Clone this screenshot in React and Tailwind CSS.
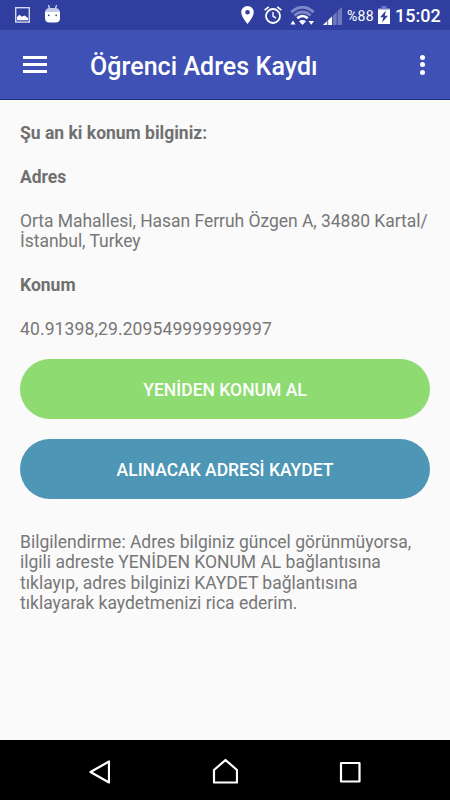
/**
 * App.jsx — Student address registration screen
 */

function StatusBar() {
  return (
    <div className="h-[30px] bg-[#303f9f] flex items-center text-white">
      {/* Notifications */}
      <svg className="w-[15px] h-[16px] ml-[15px]" viewBox="0 0 15 16">
        <rect x="0.7" y="0.7" width="13.6" height="14.4" fill="none" stroke="#d3d7f0" strokeWidth="1.4" />
        <path d="M2 13.2V10l2.5-2.2 2.3 2 2.7-1.3 3.5 2.5v2.2z" fill="white" />
      </svg>
      <svg className="w-[15px] h-[18px] ml-[15px] -mt-[3px]" viewBox="0 0 15 18">
        <path d="M3.5 0l1 3.5M11.5 0l-1 3.5" stroke="#dfe2f5" strokeWidth="1.2" />
        <path d="M0 8C0 4.5 2 3 5 3h5c3 0 5 1.5 5 5z" fill="#c5cae9" />
        <path d="M0 7h15v6c0 3-1.5 4.5-4.5 4.5h-6C1.5 17.5 0 16 0 13z" fill="white" />
        <circle cx="3.8" cy="10.3" r="0.9" fill="#303f9f" />
        <circle cx="11.2" cy="10.3" r="0.9" fill="#303f9f" />
      </svg>

      {/* Location, alarm, wifi, signal */}
      <svg className="w-[13px] h-[18px] ml-[181px]" viewBox="0 0 13 18">
        <path fillRule="evenodd" d="M6.5 0A6.3 6.3 0 0 0 0.2 6.3C0.2 10.7 6.5 18 6.5 18s6.3-7.3 6.3-11.7A6.3 6.3 0 0 0 6.5 0zm0 4a2.3 2.3 0 1 1 0 4.6 2.3 2.3 0 0 1 0-4.6z" fill="white" />
      </svg>
      <svg className="w-[18px] h-[18px] ml-[10px]" viewBox="0 0 18 18" fill="none" stroke="white">
        <circle cx="9" cy="10" r="7" strokeWidth="1.8" />
        <path d="M9 6v4.2l3 1.9" strokeWidth="1.4" />
        <path d="M0.6 4.2L4.8 0.8M17.4 4.2l-4.2-3.4" strokeWidth="1.7" />
      </svg>
      <svg className="w-[26px] h-[20px] ml-[8px] mt-[2px]" viewBox="0 0 26 20" fill="none">
        <path d="M1.5 6.3C8-0.3 17-0.3 23.500 6.300" stroke="#7d86c6" strokeWidth="3" />
        <path d="M4.500 9.600c4.700-4.800 11.300-4.800 16 0" stroke="#7d86c6" strokeWidth="2.800" />
        <path d="M7.300 12.300c3.200-3 7.200-3 10.400 0" stroke="white" strokeWidth="2.800" />
        <path d="M9 15.200c2.200-1.700 4.800-1.700 7 0L12.500 19z" fill="white" />
        <path d="M0.500 18.500l2.500-4 2.500 4zM18.500 15H24l-2.700 3.800z" fill="white" />
      </svg>
      <svg className="w-[19px] h-[18px] ml-[7px] mt-[2px]" viewBox="0 0 19 18">
        <path d="M0 18L19 0v18z" fill="#7079bd" />
        <path d="M0 18l9.5-9v9z" fill="white" />
        <path d="M4.7 12v6M9.5 7v11M14.2 3v15" stroke="#303f9f" strokeWidth="0.9" />
      </svg>

      <span className="w-[27px] ml-[5px] text-[14px] leading-none tracking-[0.3px] whitespace-nowrap mt-[1px]">%88</span>
      <svg className="w-[12px] h-[18px] ml-[4px] -mt-[1px]" viewBox="0 0 12 18">
        <path d="M3.5 0h5v2H12v4H0V2h3.5z" fill="#7079bd" />
        <path d="M0 3.5h12V18H0z" fill="white" />
        <path d="M8 4.5L2 11.2h3.3L4 16.5l6-6.7H6.7z" fill="#303f9f" />
      </svg>
      <span className="ml-[5px] text-[18px] leading-none font-medium whitespace-nowrap mt-[1px]">15:02</span>
    </div>
  );
}

function Toolbar() {
  return (
    <header className="h-[70px] bg-[#3f51b5] border-b border-[#1a2f7e] flex items-center text-white">
      <button className="ml-[23px] w-[24px] flex flex-col gap-[4.5px]">
        <span className="h-[2.5px] w-full bg-white" />
        <span className="h-[2.5px] w-full bg-white" />
        <span className="h-[2.5px] w-full bg-white" />
      </button>
      <h1 className="ml-[43px] mt-[3px] flex-1 text-[25px] leading-none tracking-[0.06px] font-medium whitespace-nowrap">
        Öğrenci Adres Kaydı
      </h1>
      <button className="mr-[25px] flex flex-col gap-[2.5px]">
        <span className="size-[5px] rounded-full bg-white" />
        <span className="size-[5px] rounded-full bg-white" />
        <span className="size-[5px] rounded-full bg-white" />
      </button>
    </header>
  );
}

function NavigationBar() {
  return (
    <nav className="h-[60px] bg-black flex items-center">
      <svg className="w-[22px] h-[24px] ml-[88px] mt-[4px]" viewBox="0 0 22 24" fill="none" stroke="white" strokeWidth="2.2" strokeLinejoin="round">
        <path d="M2.5 12L21 1.5v21z" />
      </svg>
      <svg className="w-[26px] h-[26px] ml-[102px] mt-[2px]" viewBox="0 0 26 26" fill="none" stroke="white" strokeWidth="2.2" strokeLinejoin="round">
        <path d="M2 24.5V12L13.5 2 25 12v12.5z" />
      </svg>
      <svg className="w-[22px] h-[22px] ml-[101px] mt-[4px]" viewBox="0 0 22 22" fill="none" stroke="white" strokeWidth="2.2" strokeLinejoin="round">
        <rect x="2" y="2" width="18.5" height="18.5" />
      </svg>
    </nav>
  );
}

export default function App() {
  return (
    <div className="w-[450px] h-[800px] flex flex-col overflow-hidden bg-[#fafafa] font-['Roboto',sans-serif]">
      <StatusBar />
      <Toolbar />

      <main className="flex-1 px-5 pt-[23px] text-[17.5px] leading-[20.5px] text-[#777777]">
        {/* Current location */}
        <section className="flex flex-col gap-[23.3px]">
          <p className="font-bold text-[#707070]">Şu an ki konum bilginiz:</p>
          <p className="font-bold text-[#707070]">Adres</p>
          <p className="whitespace-nowrap tracking-[-0.04px]">
            Orta Mahallesi, Hasan Ferruh Özgen A, 34880 Kartal/
            <br />
            İstanbul, Turkey
          </p>
          <p className="font-bold text-[#707070]">Konum</p>
          <p className="tracking-[0.12px]">40.91398,29.209549999999997</p>
        </section>

        <div className="mt-[20.3px] flex flex-col gap-5 text-white font-medium">
          <button className="h-[60px] pt-[2px] rounded-full bg-[#8edb71]">YENİDEN KONUM AL</button>
          <button className="h-[60px] pt-[2px] rounded-full bg-[#4d96b5]">ALINACAK ADRESİ KAYDET</button>
        </div>

        <p className="mt-[32.5px] whitespace-nowrap">
          Bilgilendirme: Adres bilginiz güncel görünmüyorsa,
          <br />
          ilgili adreste YENİDEN KONUM AL bağlantısına
          <br />
          tıklayıp, adres bilginizi KAYDET bağlantısına
          <br />
          tıklayarak kaydetmenizi rica ederim.
        </p>
      </main>

      <NavigationBar />
    </div>
  );
}
